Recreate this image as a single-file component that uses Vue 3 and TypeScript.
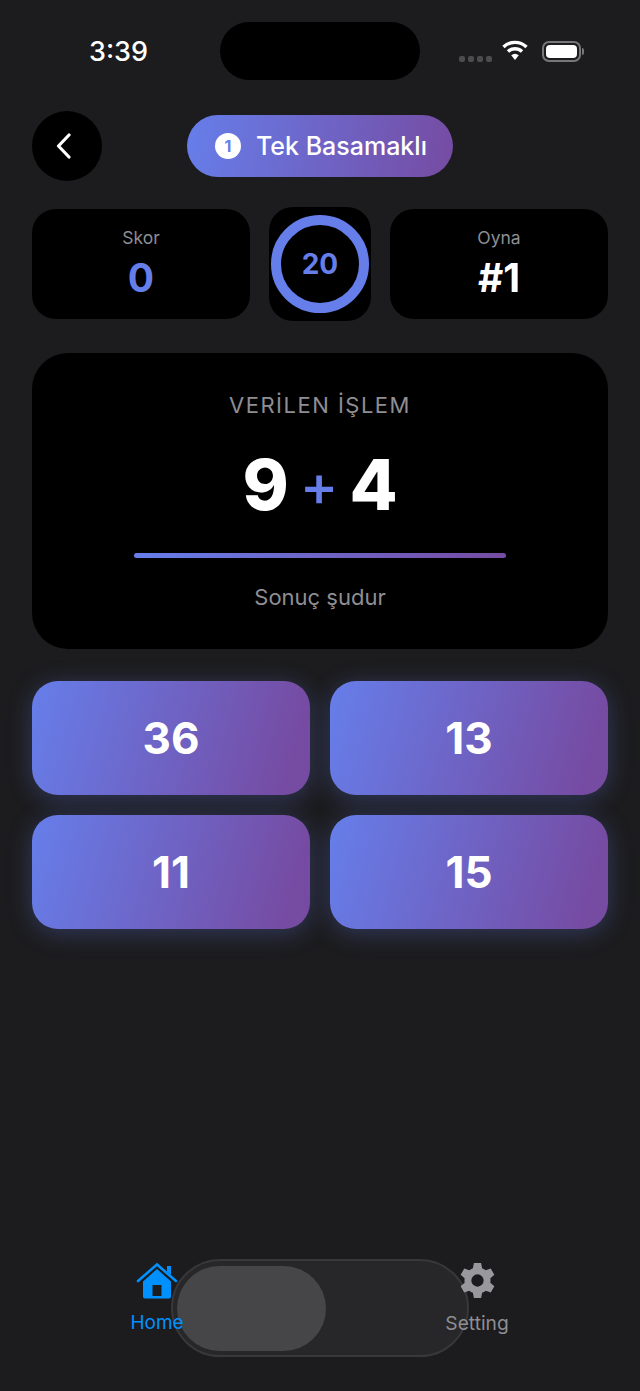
<script setup lang="ts">
const options: number[] = [36, 13, 11, 15]
</script>

<template>
  <div class="screen">
    <header class="status">
      <span class="time">3:39</span>
      <div class="island"></div>
      <div class="indicators">
        <div class="dots"><i></i><i></i><i></i><i></i></div>
        <svg class="wifi" width="26" height="21" viewBox="0 0 26 21">
          <path d="M1.500 7 A16.500 16.500 0 0 1 24.500 7" fill="none" stroke="#fff" stroke-width="3.400"/>
          <path d="M6 11.500 A10.200 10.200 0 0 1 20 11.500" fill="none" stroke="#fff" stroke-width="3.400"/>
          <path d="M9.200 15.200 A6 6 0 0 1 16.800 15.200 L13 20 Z" fill="#fff"/>
        </svg>
        <div class="battery"><div class="battery-fill"></div><div class="battery-cap"></div></div>
      </div>
    </header>

    <div class="top">
      <button class="back">
        <svg width="18" height="26" viewBox="0 0 18 26"><path d="M14 2 L3.500 13 L14 24" fill="none" stroke="#fff" stroke-width="3.200" stroke-linecap="round" stroke-linejoin="round"/></svg>
      </button>
      <div class="level">
        <span class="level-num">1</span>
        <span class="level-text">Tek Basamaklı</span>
      </div>
    </div>

    <section class="stats">
      <div class="stat">
        <span class="stat-label">Skor</span>
        <span class="stat-value blue">0</span>
      </div>
      <div class="timer"><div class="ring">20</div></div>
      <div class="stat">
        <span class="stat-label">Oyna</span>
        <span class="stat-value">#1</span>
      </div>
    </section>

    <section class="question">
      <div class="q-title">VERİLEN İŞLEM</div>
      <div class="q-expr">
        <span>9</span><span class="plus">+</span><span>4</span>
      </div>
      <div class="q-line"></div>
      <div class="q-sub">Sonuç şudur</div>
    </section>

    <section class="options">
      <button v-for="o in options" :key="o" class="option">{{ o }}</button>
    </section>

    <nav class="tabs">
      <div class="tab-pill"><div class="tab-thumb"></div></div>
      <div class="tab tab-active">
        <svg width="42" height="38" viewBox="0 0 42 38">
          <path d="M2 19 L21 2.500 L40 19" fill="none" stroke="#0091ff" stroke-width="2.600" stroke-linecap="round"/>
          <path d="M31 4 h4 v9 l-4 -3.500 Z" fill="#0091ff"/>
          <path d="M7 19.500 L21 7 L35 19.500 V34.500 a2 2 0 0 1 -2 2 H9 a2 2 0 0 1 -2 -2 Z M16.500 34 H25.500 V23 H16.500 Z" fill="#0091ff" fill-rule="evenodd"/>
        </svg>
        <span>Home</span>
      </div>
      <div class="tab">
        <svg width="37" height="37" viewBox="1.500 0.500 35 36">
          <path fill-rule="evenodd" fill="#98989d" d="M15.500 1.500 H22.500 L23.500 6.500 A13 13 0 0 1 27 8.500 L31.900 6.900 L35.400 13 L31.500 16.400 A13 13 0 0 1 31.500 20.600 L35.400 24 L31.900 30.100 L27 28.500 A13 13 0 0 1 23.500 30.500 L22.500 35.500 H15.500 L14.500 30.500 A13 13 0 0 1 11 28.500 L6.100 30.100 L2.600 24 L6.500 20.600 A13 13 0 0 1 6.500 16.400 L2.600 13 L6.100 6.900 L11 8.500 A13 13 0 0 1 14.500 6.500 Z M19 12.500 A6 6 0 1 0 19 24.500 A6 6 0 1 0 19 12.500 Z"/>
        </svg>
        <span class="setting-label">Setting</span>
      </div>
    </nav>
  </div>
</template>

<style>
html, body { margin: 0; background: #1c1c1e; }
</style>

<style scoped>
.screen {
  width: 640px;
  height: 1391px;
  background: #1c1c1e;
  font-family: Inter, "Liberation Sans", sans-serif;
  color: #fff;
  display: flex;
  flex-direction: column;
  overflow: hidden;
}
.status {
  position: relative;
  height: 111px;
  box-sizing: border-box;
  flex: none;
  display: flex;
  align-items: flex-start;
  padding: 36px 59px 0 89px;
}
.time {
  font-size: 27px;
  line-height: 32px;
  font-weight: 500;
}
.island {
  position: absolute;
  left: 220px;
  top: 22px;
  width: 200px;
  height: 58px;
  border-radius: 29px;
  background: #000;
}
.indicators {
  margin-left: auto;
  margin-top: 5px;
  display: flex;
  align-items: center;
}
.dots { display: flex; gap: 3px; margin: 15px 10px 0 0; }
.dots i { width: 6px; height: 6px; border-radius: 2px; background: #4c4c4e; display: block; }
.wifi { margin: -3px 14px 0 0; }
.battery {
  position: relative;
  width: 39px;
  height: 21px;
  box-sizing: border-box;
  border: 2px solid #77777a;
  border-radius: 7px;
  padding: 2px;
}
.battery-fill { width: 100%; height: 100%; border-radius: 4px; background: #fff; }
.battery-cap { position: absolute; right: -5px; top: 5px; width: 2px; height: 7px; background: #77777a; border-radius: 0 2px 2px 0; }

.top {
  display: grid;
  grid-template-columns: 1fr 266px 1fr;
  align-items: center;
  height: 70px;
  padding: 0 32px;
  flex: none;
}
.back {
  width: 70px;
  height: 70px;
  border: 0;
  padding: 0 6px 0 0;
  border-radius: 50%;
  background: #000;
  display: flex;
  align-items: center;
  justify-content: center;
}
.level {
  height: 62px;
  box-sizing: border-box;
  border-radius: 31px;
  background: linear-gradient(100deg, #667eea, #764ba2);
  display: flex;
  align-items: center;
  padding-left: 28px;
  gap: 15px;
}
.level-num {
  width: 26px;
  height: 26px;
  border-radius: 50%;
  background: #fff;
  color: #667eea;
  font-size: 16px;
  font-weight: 700;
  display: flex;
  align-items: center;
  justify-content: center;
}
.level-text { font-size: 25px; font-weight: 500; }

.stats {
  margin: 26px 32px 0;
  display: flex;
  align-items: center;
  justify-content: space-between;
  height: 114px;
  flex: none;
}
.stat {
  width: 218px;
  height: 110px;
  border-radius: 24px;
  background: #000;
  display: flex;
  flex-direction: column;
  align-items: center;
  padding-top: 18px;
  box-sizing: border-box;
}
.stat-label { font-size: 17.500px; line-height: 22px; color: #8e8e93; }
.stat-value { font-size: 39px; line-height: 44px; font-weight: 700; margin-top: 7px; }
.blue { color: #667eea; }
.timer {
  width: 102px;
  height: 114px;
  border-radius: 24px;
  background: #000;
  display: flex;
  align-items: center;
  justify-content: center;
}
.ring {
  width: 98px;
  height: 98px;
  box-sizing: border-box;
  border: 10px solid #667eea;
  border-radius: 50%;
  color: #667eea;
  font-size: 28px;
  font-weight: 700;
  display: flex;
  align-items: center;
  justify-content: center;
}

.question {
  margin: 32px 32px 0;
  height: 296px;
  box-sizing: border-box;
  border-radius: 36px;
  background: #000;
  display: flex;
  flex-direction: column;
  align-items: center;
  padding-top: 38px;
  flex: none;
}
.q-title { font-size: 22px; line-height: 28px; letter-spacing: 1.500px; color: #8e8e93; }
.q-expr {
  display: flex;
  align-items: center;
  gap: 11px;
  margin-top: 26px;
  height: 80px;
  font-size: 70px;
  line-height: 80px;
  font-weight: 800;
}
.plus { color: #667eea; font-size: 58px; font-weight: 500; }
.q-line {
  width: 372px;
  height: 5px;
  border-radius: 3px;
  margin-top: 28px;
  background: linear-gradient(to right, #667eea, #764ba2);
}
.q-sub { margin-top: 25px; font-size: 22px; line-height: 28px; color: #8e8e93; }

.options {
  margin: 32px 32px 0;
  display: grid;
  grid-template-columns: 1fr 1fr;
  gap: 20px;
  flex: none;
}
.option {
  height: 114px;
  border: 0;
  border-radius: 26px;
  background: linear-gradient(105deg, #667eea, #764ba2 92%);
  box-shadow: 0 4px 24px rgba(102, 126, 234, 0.3);
  color: #fff;
  font-family: inherit;
  font-size: 44px;
  font-weight: 700;
}

.tabs {
  position: relative;
  margin-top: auto;
  margin-bottom: 34px;
  height: 98px;
  flex: none;
  display: flex;
  justify-content: space-between;
  padding: 0 103px 0 97px;
  box-sizing: border-box;
}
.tab-pill {
  position: absolute;
  left: 171px;
  top: 0;
  width: 298px;
  height: 98px;
  box-sizing: border-box;
  border: 2px solid #38383a;
  border-radius: 49px;
  background: #272729;
}
.tab-thumb {
  position: absolute;
  left: 4px;
  top: 5px;
  width: 149px;
  height: 85px;
  border-radius: 43px;
  background: #464648;
}
.tab {
  position: relative;
  width: 120px;
  display: flex;
  flex-direction: column;
  align-items: center;
  color: #8e8e93;
  font-size: 19px;
  line-height: 24px;
  padding-top: 3px;
  gap: 11px;
}
.setting-label { margin-top: 1px; font-size: 19.200px; }
.tab-active { color: #0091ff; }
</style>
